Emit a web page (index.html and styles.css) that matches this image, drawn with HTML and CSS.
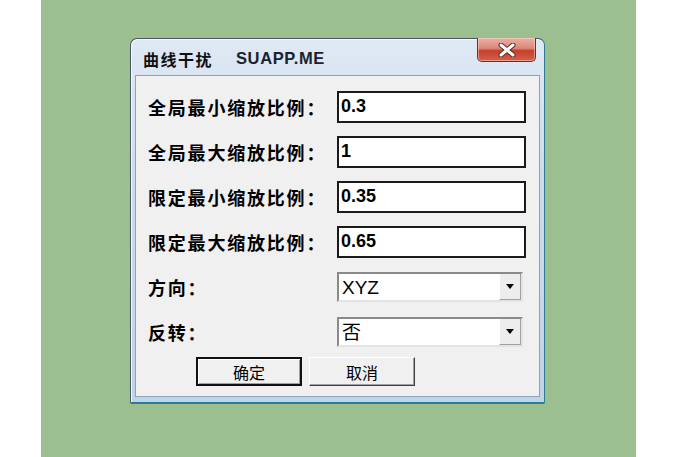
FILE: index.html
```html
<!DOCTYPE html>
<html lang="zh-CN">
<head>
    <meta charset="UTF-8">
    <title>曲线干扰</title>
    <link rel="stylesheet" href="styles.css">
</head>
<body>
    <div class="desk">
        <div class="dialog">
            <div class="titlebar">
                <span class="title_cn">曲线干扰</span>
                <span class="title_en">SUAPP.ME</span>
                <button class="close">
                    <svg viewBox="0 0 20 14" width="20" height="14">
                        <path d="M4 2 L16 12 M16 2 L4 12" stroke="#5a2a24" stroke-width="5" stroke-linecap="round"/>
                        <path d="M4 2 L16 12 M16 2 L4 12" stroke="#ffffff" stroke-width="3" stroke-linecap="round"/>
                    </svg>
                </button>
            </div>
            <div class="client">
                <div class="row">
                    <div class="label">全局最小缩放比例：</div>
                    <div class="field">0.3</div>
                </div>
                <div class="row">
                    <div class="label">全局最大缩放比例：</div>
                    <div class="field">1</div>
                </div>
                <div class="row">
                    <div class="label">限定最小缩放比例：</div>
                    <div class="field">0.35</div>
                </div>
                <div class="row">
                    <div class="label">限定最大缩放比例：</div>
                    <div class="field">0.65</div>
                </div>
                <div class="row">
                    <div class="label">方向：</div>
                    <div class="combo">
                        <span class="combo_text">XYZ</span>
                        <span class="drop"><span class="arrow"></span></span>
                    </div>
                </div>
                <div class="row">
                    <div class="label">反转：</div>
                    <div class="combo">
                        <span class="combo_text">否</span>
                        <span class="drop"><span class="arrow"></span></span>
                    </div>
                </div>
                <div class="buttons">
                    <button class="btn btn_default">确定</button>
                    <button class="btn">取消</button>
                </div>
            </div>
        </div>
    </div>
</body>
</html>
```

FILE: styles.css
```css
body {
    margin: 0;
    background: #ffffff;
}
.desk {
    margin-left: 41px;
    width: 595px;
    height: 457px;
    box-sizing: border-box;
    padding: 38px 0 0 89px;
    background: #9cbf8f;
}
.dialog {
    width: 415px;
    height: 366px;
    box-sizing: border-box;
    display: flex;
    flex-direction: column;
    padding: 0 4px 5px;
    border: 1px solid #4a5866;
    border-right-color: #2c7a96;
    border-bottom: 2px solid #2c7a96;
    border-radius: 7px 7px 2px 2px;
    background: linear-gradient(to bottom, #dfe9f4, #cbdbeb 40%, #c0d4e7);
    box-shadow: inset 1px 1px 0 #f4f8fc;
}
.titlebar {
    position: relative;
    height: 36px;
    display: flex;
    align-items: center;
    padding-left: 8px;
    padding-top: 3px;
    box-sizing: border-box;
    font-weight: bold;
    color: #111111;
}
.title_cn {
    font-family: "Noto Sans CJK SC", sans-serif;
    font-size: 16px;
    letter-spacing: 1.5px;
    margin-right: 23px;
}
.title_en {
    font-family: "Liberation Sans", sans-serif;
    font-size: 16.5px;
    letter-spacing: 0.6px;
    color: #1a2230;
}
.close {
    position: absolute;
    top: -1px;
    right: 4px;
    width: 59px;
    height: 24px;
    padding: 0;
    display: flex;
    align-items: center;
    justify-content: center;
    border: 1px solid #6b2f28;
    border-top: 0;
    border-radius: 0 0 5px 5px;
    background: linear-gradient(to bottom, #eab1a6, #dc8676 45%, #c6402d 55%, #d2604a);
    box-shadow: inset 0 0 0 1px rgba(255, 220, 210, 0.5);
}
.client {
    flex: 1;
    display: flex;
    flex-direction: column;
    gap: 13px;
    padding: 15px 0 0 12px;
    background: #f0f0f0;
    border: 1px solid #8ea3b9;
}
.row {
    display: flex;
    align-items: center;
    height: 32px;
}
.label {
    width: 189px;
    font-family: "Noto Sans CJK SC", sans-serif;
    font-size: 18px;
    font-weight: bold;
    letter-spacing: 1.8px;
    color: #000000;
    white-space: nowrap;
}
.field {
    width: 189px;
    height: 32px;
    box-sizing: border-box;
    border: 2px solid #1a1a1a;
    background: #ffffff;
    padding: 0 2px;
    font-family: "Liberation Sans", sans-serif;
    font-size: 18px;
    font-weight: bold;
    line-height: 26px;
    color: #000000;
}
.combo {
    width: 186px;
    height: 30px;
    box-sizing: border-box;
    display: flex;
    border: 2px solid;
    border-color: #8a8a8a #e4e4e4 #e4e4e4 #8a8a8a;
    background: #ffffff;
}
.combo_text {
    flex: 1;
    padding: 1px 0 0 3px;
    font-family: "Liberation Sans", "Noto Sans CJK SC", sans-serif;
    font-size: 19px;
    line-height: 25px;
    color: #000000;
}
.drop {
    width: 22px;
    display: flex;
    align-items: center;
    justify-content: center;
    box-sizing: border-box;
    background: #ededed;
    border-left: 1px solid #ffffff;
    border-right: 1px solid #a0a0a0;
    border-bottom: 1px solid #a0a0a0;
}
.arrow {
    width: 0;
    height: 0;
    border-left: 4px solid transparent;
    border-right: 4px solid transparent;
    border-top: 5px solid #000000;
}
.buttons {
    display: flex;
    gap: 7px;
    margin: -4px 0 0 48px;
}
.btn {
    width: 106px;
    height: 29px;
    padding: 0;
    background: #f0f0f0;
    border: 1px solid;
    border-color: #ffffff #404040 #404040 #ffffff;
    box-shadow: inset -1px -1px 0 #a0a0a0;
    font-family: "Noto Sans CJK SC", sans-serif;
    font-size: 16px;
    color: #000000;
}
.btn_default {
    border: 2px solid #111111;
    box-shadow: inset 1px 1px 0 #ffffff, inset -1px -1px 0 #a0a0a0;
}
```
